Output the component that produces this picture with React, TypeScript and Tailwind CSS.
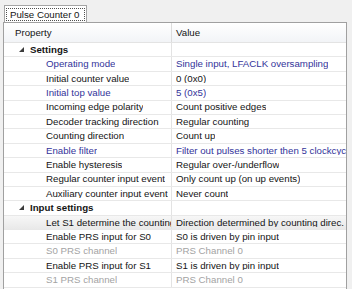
import React from 'react';

type Row = {
  label: string;
  value?: string;
  group?: boolean;
  tone?: 'blue' | 'dim' | 'normal';
  selected?: boolean;
};

const rows: Row[] = [
  { label: 'Settings', group: true },
  { label: 'Operating mode', value: 'Single input, LFACLK oversampling', tone: 'blue' },
  { label: 'Initial counter value', value: '0 (0x0)' },
  { label: 'Initial top value', value: '5 (0x5)', tone: 'blue' },
  { label: 'Incoming edge polarity', value: 'Count positive edges' },
  { label: 'Decoder tracking direction', value: 'Regular counting' },
  { label: 'Counting direction', value: 'Count up' },
  { label: 'Enable filter', value: 'Filter out pulses shorter then 5 clockcycles', tone: 'blue' },
  { label: 'Enable hysteresis', value: 'Regular over-/underflow' },
  { label: 'Regular counter input event', value: 'Only count up (on up events)' },
  { label: 'Auxiliary counter input event', value: 'Never count' },
  { label: 'Input settings', group: true },
  { label: 'Let S1 determine the counting direction', value: 'Direction determined by counting direc.', selected: true },
  { label: 'Enable PRS input for S0', value: 'S0 is driven by pin input' },
  { label: 'S0 PRS channel', value: 'PRS Channel 0', tone: 'dim' },
  { label: 'Enable PRS input for S1', value: 'S1 is driven by pin input' },
  { label: 'S1 PRS channel', value: 'PRS Channel 0', tone: 'dim' },
];

const toneClass = (t?: Row['tone']) =>
  t === 'blue' ? 'text-[#33339a]' : t === 'dim' ? 'text-[#a3a3a3]' : 'text-[#141414]';

export default function App() {
  return (
    <div
      className="w-[352px] h-[289px] overflow-hidden bg-[#f0f0f0] text-[9.7px] leading-none"
      style={{ fontFamily: '"Liberation Sans", Arial, sans-serif' }}
    >
      {/* tab strip */}
      <div className="h-[22px] pl-[4px] pt-[5px] flex items-end">
        <div className="h-[17px] w-[83px] bg-white border border-b-0 border-[#a5a5a5] px-[1px] pt-[2px]">
          <div className="h-[13px] border border-dotted border-[#505050] flex items-center pl-[3px] text-[#141414] whitespace-nowrap">
            Pulse Counter 0
          </div>
        </div>
      </div>

      {/* property sheet */}
      <div className="ml-[3px] w-[344px] h-[267px] bg-white border-l border-r border-t border-[#a0a0a0] overflow-hidden">
        <div className="flex h-[20px] border-b border-[#e3e3e3] bg-gradient-to-b from-white to-[#f2f4f7] text-[#141414]">
          <div className="w-[168px] border-r border-[#dcdcdc] flex items-center pl-[11px]">Property</div>
          <div className="flex-1 flex items-center pl-[4px]">Value</div>
        </div>
        {rows.map(r => (
          <div
            key={r.label}
            className={`flex h-[14.4px] border-b border-[#e8e8e8] ${r.selected ? 'bg-gradient-to-b from-[#f7f7f7] to-[#e9e9e9]' : ''}`}
          >
            <div className="w-[168px] shrink-0 border-r border-[#e3e3e3] flex items-center overflow-hidden whitespace-nowrap">
              {r.group ? (
                <div className="flex items-center pl-[15px] font-bold text-[#141414]">
                  <svg width="5" height="5" viewBox="0 0 5 5" className="mr-[6px]">
                    <polygon points="5,0 5,5 0,5" fill="#3c3c3c" />
                  </svg>
                  {r.label}
                </div>
              ) : (
                <div className={`min-w-0 pl-[42px] overflow-hidden ${toneClass(r.tone)}`}>{r.label}</div>
              )}
            </div>
            <div className={`flex-1 min-w-0 flex items-center pl-[4px] overflow-hidden whitespace-nowrap ${toneClass(r.tone)}`}>
              <span className="min-w-0 overflow-hidden">{r.value}</span>
            </div>
          </div>
        ))}
      </div>
    </div>
  );
}
